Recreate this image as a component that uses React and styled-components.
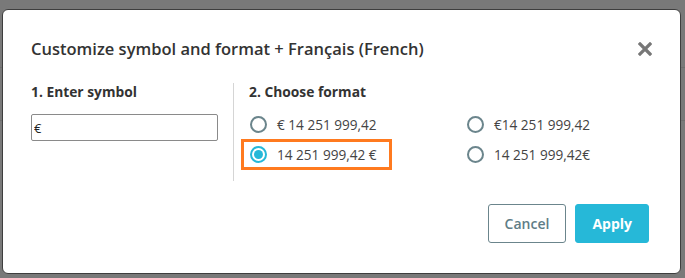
import React from 'react'
import styled, { createGlobalStyle } from 'styled-components';

const GlobalStyle = createGlobalStyle`
html, body {
  margin: 0;
  padding: 0;
}
body {
  font-family: "Open Sans", "Liberation Sans", sans-serif;
  background: #797979;
}
`;

const formats = [
    { label: '€ 14 251 999,42' },
    { label: '€14 251 999,42' },
    { label: '14 251 999,42 €', checked: true, highlighted: true },
    { label: '14 251 999,42€' },
];

const CloseIcon = () => (
    <svg width="14" height="14" viewBox="0 0 14 14">
        <path d="M2 2 L12 12 M12 2 L2 12" stroke="#777" strokeWidth="3.2" strokeLinecap="square" fill="none" />
    </svg>
);

export const App = () => {
    return (
        <Backdrop>
            <GlobalStyle />
            <Modal>
                <Header>
                    <Title>Customize symbol and format + Français (French)</Title>
                    <CloseButton><CloseIcon /></CloseButton>
                </Header>
                <Body>
                    <SymbolColumn>
                        <StepLabel>1. Enter symbol</StepLabel>
                        <SymbolInput defaultValue="€" />
                    </SymbolColumn>
                    <FormatColumn>
                        <StepLabel>2. Choose format</StepLabel>
                        <OptionGrid>
                            {formats.map((f) => (
                                <Option key={f.label} $highlighted={f.highlighted}>
                                    <Radio $checked={f.checked} />
                                    <OptionText>{f.label}</OptionText>
                                </Option>
                            ))}
                        </OptionGrid>
                    </FormatColumn>
                </Body>
                <Footer>
                    <Button>Cancel</Button>
                    <Button $primary>Apply</Button>
                </Footer>
            </Modal>
        </Backdrop>
    );
};

export default App;

const Backdrop = styled.div`
width: 685px;
height: 278px;
box-sizing: border-box;
padding: 9px 4px 4px 2px;
display: flex;
background:
  linear-gradient(#6e6e6e, #6e6e6e) 0 67px / 100% 1px no-repeat,
  linear-gradient(#6e6e6e, #6e6e6e) 0 120px / 100% 1px no-repeat,
  #797979;
`;

const Modal = styled.div`
flex: 1;
min-width: 0;
box-sizing: border-box;
background: #fff;
border: 1px solid #3e3e3e;
border-radius: 6px;
padding: 27px 31px 30px 28px;
display: flex;
flex-direction: column;
`;

const Header = styled.div`
display: flex;
align-items: center;
justify-content: space-between;
height: 24px;
`;

const Title = styled.h2`
margin: 0;
font-size: 16.5px;
font-weight: 600;
color: #333;
line-height: 24px;
`;

const CloseButton = styled.div`
display: flex;
width: 14px;
height: 14px;
margin-right: -3px;
`;

const Body = styled.div`
display: flex;
margin-top: 22px;
`;

const SymbolColumn = styled.div`
width: 202px;
padding-bottom: 40px;
border-right: 1px solid #d5d5d5;
display: flex;
flex-direction: column;
align-items: flex-start;
`;

const FormatColumn = styled.div`
flex: 1;
padding-left: 15px;
`;

const StepLabel = styled.div`
font-size: 13.8px;
font-weight: 700;
color: #333;
line-height: 18px;
`;

const SymbolInput = styled.input`
margin-top: 13px;
width: 187px;
height: 27px;
box-sizing: border-box;
border: 1px solid #8a8a8a;
border-radius: 2px;
padding: 0 2px;
font-family: "Open Sans", "Liberation Sans", sans-serif;
font-size: 13px;
color: #222;
outline: none;
`;

const OptionGrid = styled.div`
margin-top: 8px;
margin-left: -8px;
display: grid;
grid-template-columns: 217px auto;
grid-auto-rows: 30px;
`;

const Option = styled.label`
justify-self: start;
display: flex;
align-items: center;
gap: 10px;
box-sizing: border-box;
height: 31px;
padding: 0 12px 0 6px;
border: 3px solid ${(p) => (p.$highlighted ? '#ff7a1f' : 'transparent')};
`;

const Radio = styled.span`
width: 17px;
height: 17px;
box-sizing: border-box;
border-radius: 50%;
border: 2px solid ${(p) => (p.$checked ? '#26b8d8' : '#6b858c')};
display: flex;
align-items: center;
justify-content: center;
&::after {
  content: '';
  width: 9px;
  height: 9px;
  border-radius: 50%;
  background: #26b8d8;
  display: ${(p) => (p.$checked ? 'block' : 'none')};
}
`;

const OptionText = styled.span`
font-size: 13.6px;
color: #444;
line-height: 18px;
`;

const Footer = styled.div`
margin-top: auto;
display: flex;
justify-content: flex-end;
gap: 9px;
`;

const Button = styled.button`
height: 39px;
box-sizing: border-box;
padding: 0 16px;
border-radius: 3px;
border: 1px solid ${(p) => (p.$primary ? '#26b8d8' : '#6b858c')};
background: ${(p) => (p.$primary ? '#26b8d8' : '#fff')};
color: ${(p) => (p.$primary ? '#fff' : '#607d86')};
font-family: "Open Sans", "Liberation Sans", sans-serif;
font-size: 14px;
font-weight: ${(p) => (p.$primary ? 700 : 600)};
`;
